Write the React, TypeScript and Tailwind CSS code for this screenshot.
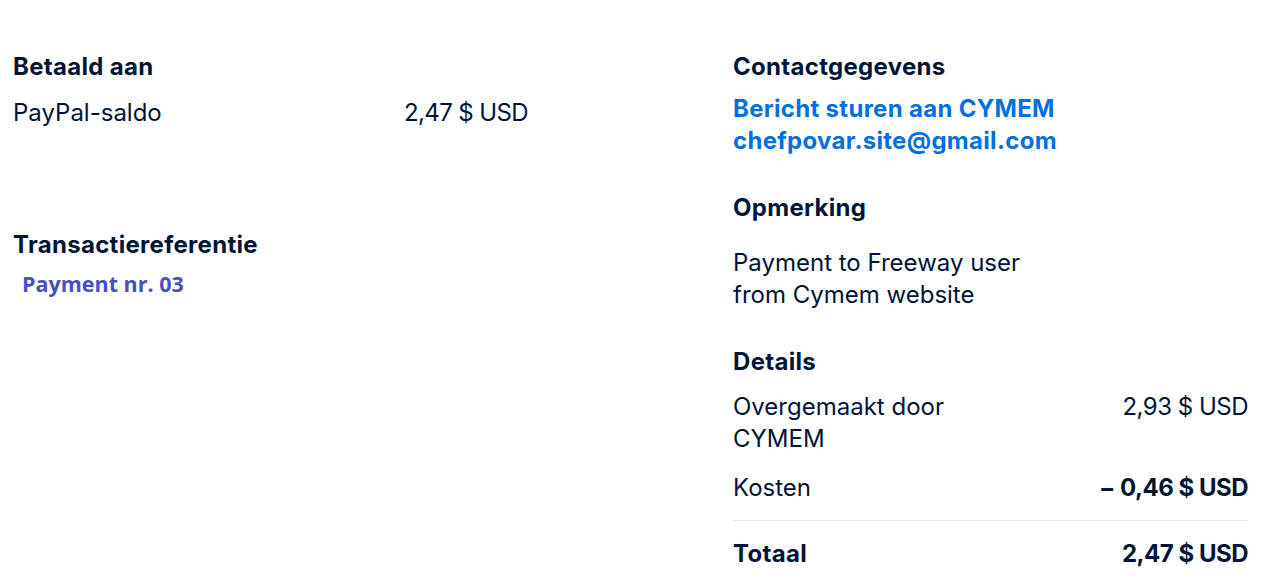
import React from 'react';

const navy = 'text-[#001435]';

function Heading({ children, className = '' }: { children: React.ReactNode; className?: string }) {
  return <h3 className={`text-[24px] leading-8 font-bold tracking-[0.3px] ${navy} ${className}`}>{children}</h3>;
}

export default function App() {
  return (
    <div className="min-h-[586px] bg-white font-['Inter',sans-serif] antialiased">
      <div className="grid grid-cols-[515px_515px] gap-x-[205px] pl-[13px] pt-[51px]">
        {/* left column */}
        <div className="flex flex-col">
          <Heading>Betaald aan</Heading>
          <div className={`mt-[14px] flex justify-between text-[24px] leading-8 ${navy}`}>
            <span>PayPal-saldo</span>
            <span className="tracking-[-0.6px]">2,47 $ USD</span>
          </div>

          <Heading className="mt-[100px]">Transactiereferentie</Heading>
          <p className="mt-[10px] pl-[9px] font-['Open_Sans',sans-serif] text-[21.5px] leading-[26px] font-bold text-[#4a4fc4]">
            Payment nr. 03
          </p>
        </div>

        {/* right column */}
        <div className="flex flex-col">
          <Heading>Contactgegevens</Heading>
          <div className="mt-[10px] flex flex-col text-[24px] leading-8 font-bold tracking-[0.3px] text-[#0070e0]">
            <a href="#">Bericht sturen aan CYMEM</a>
            <a href="#">chefpovar.site@gmail.com</a>
          </div>

          <Heading className="mt-[35px]">Opmerking</Heading>
          <p className={`mt-[23px] w-[310px] text-[24px] leading-8 ${navy}`}>
            Payment to Freeway user from Cymem website
          </p>

          <Heading className="mt-[35px]">Details</Heading>
          <div className={`mt-[13px] flex justify-between text-[24px] leading-8 ${navy}`}>
            <span className="w-[240px]">Overgemaakt door CYMEM</span>
            <span className="tracking-[-0.5px]">2,93 $ USD</span>
          </div>
          <div className={`mt-[17px] flex justify-between text-[24px] leading-8 ${navy}`}>
            <span>Kosten</span>
            <span className="font-bold tracking-[-0.5px]">− 0,46 $ USD</span>
          </div>
          <div className="mt-4 border-t border-[#e6e6e6]" />
          <div className={`mt-[17px] flex justify-between text-[24px] leading-8 font-bold ${navy}`}>
            <span className="tracking-[0.3px]">Totaal</span>
            <span className="tracking-[-0.5px]">2,47 $ USD</span>
          </div>
        </div>
      </div>
    </div>
  );
}
